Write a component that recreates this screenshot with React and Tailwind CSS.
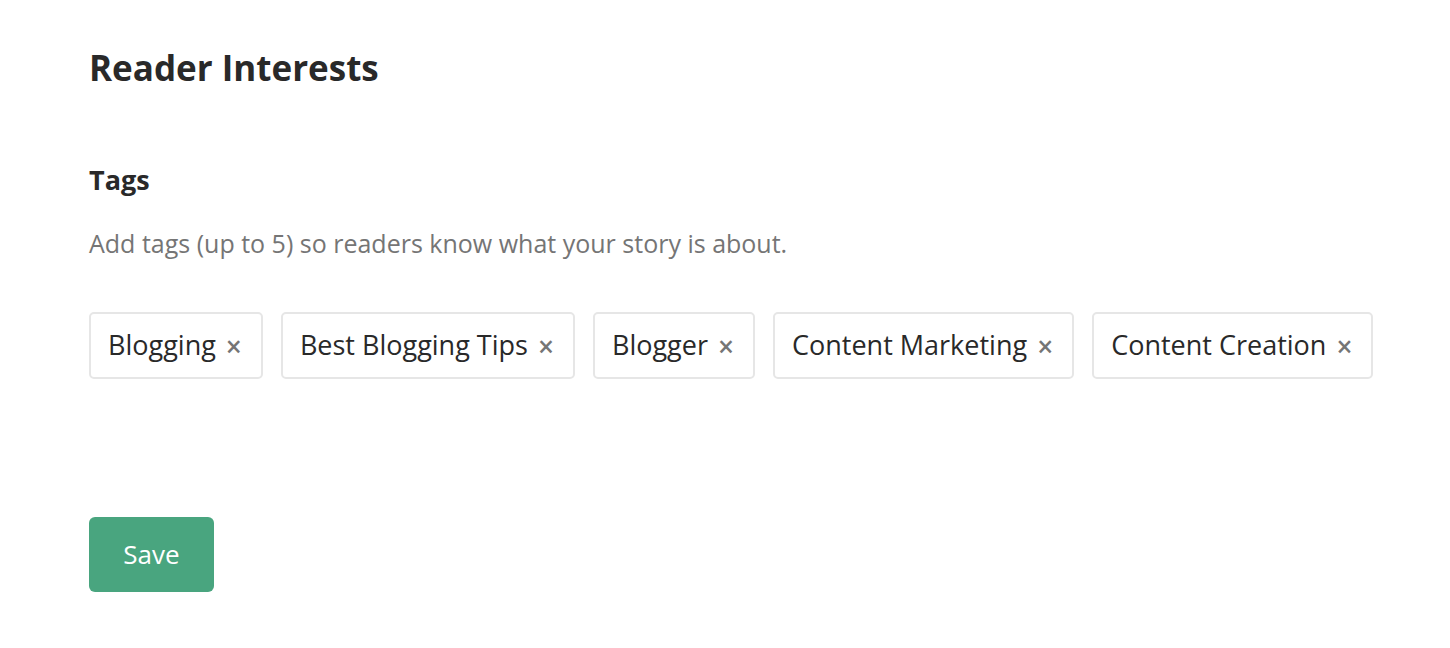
import React from 'react';

const tags = ['Blogging', 'Best Blogging Tips', 'Blogger', 'Content Marketing', 'Content Creation'];

const Tag = ({ label }) => (
    <div className="flex shrink-0 items-center h-[67px] pl-[17px] pr-[19px] border-2 border-[#e6e6e6] rounded-[5px] bg-white whitespace-nowrap">
        <span className="text-[27px] text-[#292929]">{label}</span>
        <span className="ml-[10px] text-[28px] font-semibold text-[#757575] leading-none">×</span>
    </div>
);

export default function App() {
    return (
        <div className="min-h-screen bg-white px-[89px] pt-[40px]" style={{ fontFamily: '"Open Sans", Lato, sans-serif' }}>
            <h1 className="text-[35px] font-bold text-[#292929] leading-[56px]">Reader Interests</h1>

            <h2 className="mt-[64px] text-[27px] font-bold text-[#292929] leading-[40px]">Tags</h2>
            <p className="mt-[26px] text-[25px] text-[#757575] leading-[34px]">
                Add tags (up to 5) so readers know what your story is about.
            </p>

            <div className="mt-[52px] flex gap-[18px]">
                {tags.map((t) => (
                    <Tag key={t} label={t} />
                ))}
            </div>

            <button className="mt-[138px] w-[125px] h-[75px] rounded-[6px] bg-[#49a57f] text-white text-[26px]">
                Save
            </button>
        </div>
    );
}
